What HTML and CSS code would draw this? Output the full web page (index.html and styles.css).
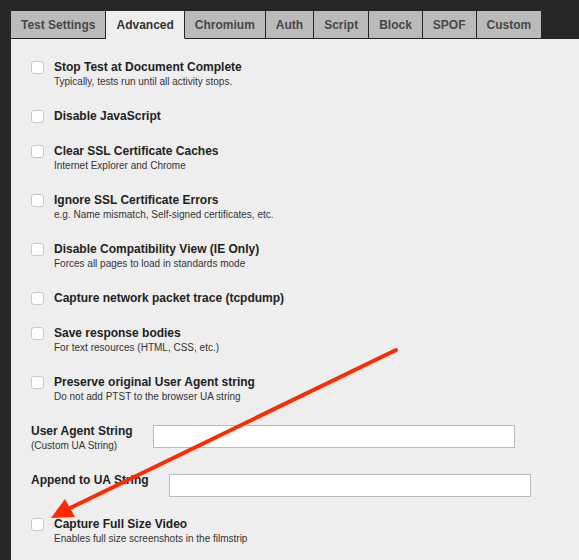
FILE: index.html
```html
<!DOCTYPE html>
<html lang="en">

<head>
    <meta charset="UTF-8">
    <title>Advanced Settings</title>
    <link rel="stylesheet" href="styles.css">
</head>

<body>

    <div class="tabs">
        <span class="tab">Test Settings</span>
        <span class="tab active">Advanced</span>
        <span class="tab">Chromium</span>
        <span class="tab">Auth</span>
        <span class="tab">Script</span>
        <span class="tab">Block</span>
        <span class="tab">SPOF</span>
        <span class="tab">Custom</span>
    </div>

    <div class="panel">

        <label class="option">
            <input type="checkbox">
            <span class="text">
                <span class="title">Stop Test at Document Complete</span>
                <span class="desc">Typically, tests run until all activity stops.</span>
            </span>
        </label>

        <label class="option">
            <input type="checkbox">
            <span class="text">
                <span class="title">Disable JavaScript</span>
            </span>
        </label>

        <label class="option">
            <input type="checkbox">
            <span class="text">
                <span class="title">Clear SSL Certificate Caches</span>
                <span class="desc">Internet Explorer and Chrome</span>
            </span>
        </label>

        <label class="option">
            <input type="checkbox">
            <span class="text">
                <span class="title">Ignore SSL Certificate Errors</span>
                <span class="desc">e.g. Name mismatch, Self-signed certificates, etc.</span>
            </span>
        </label>

        <label class="option">
            <input type="checkbox">
            <span class="text">
                <span class="title">Disable Compatibility View (IE Only)</span>
                <span class="desc">Forces all pages to load in standards mode</span>
            </span>
        </label>

        <label class="option">
            <input type="checkbox">
            <span class="text">
                <span class="title">Capture network packet trace (tcpdump)</span>
            </span>
        </label>

        <label class="option">
            <input type="checkbox">
            <span class="text">
                <span class="title">Save response bodies</span>
                <span class="desc">For text resources (HTML, CSS, etc.)</span>
            </span>
        </label>

        <label class="option">
            <input type="checkbox">
            <span class="text">
                <span class="title">Preserve original User Agent string</span>
                <span class="desc">Do not add PTST to the browser UA string</span>
            </span>
        </label>

        <div class="field">
            <label class="text" for="uastring">
                <span class="title">User Agent String</span>
                <span class="desc">(Custom UA String)</span>
            </label>
            <input type="text" id="uastring">
        </div>

        <div class="field">
            <label class="text" for="appendua">
                <span class="title">Append to UA String</span>
            </label>
            <input type="text" id="appendua">
        </div>

        <label class="option">
            <input type="checkbox">
            <span class="text">
                <span class="title">Capture Full Size Video</span>
                <span class="desc">Enables full size screenshots in the filmstrip</span>
            </span>
        </label>

    </div>

    <!-- annotation arrow -->
    <svg class="arrow" width="579" height="560" viewBox="0 0 579 560">
        <line x1="396" y1="350" x2="68" y2="509" stroke="#ff2a00" stroke-width="4" stroke-linecap="round" />
        <polygon points="51,518 65,499 75,517" fill="#ff2a00" />
    </svg>

</body>

</html>
```

FILE: styles.css
```css
:root {
    --bg: #262626;
    --panel: #eeeeee;
    --tab: #bbbbbb;
    --tab-text: #474747;
    --text: #222;
    --muted: #333;
    --border: #bbbbbb;
}

* {
    box-sizing: border-box;
}

html,
body {
    height: 100%;
}

body {
    margin: 0;
    padding: 11px 0 0 11px;
    background: var(--bg);
    font-family: "Liberation Sans", Arial, sans-serif;
    color: var(--text);
    position: relative;
    overflow: hidden;
    display: flex;
    flex-direction: column;
}

.tabs {
    display: flex;
}

.tab {
    background: var(--tab);
    color: var(--tab-text);
    font-size: 12px;
    font-weight: bold;
    line-height: 14px;
    padding: 7px 10px 6px;
    border-right: 1px solid var(--bg);
    border-bottom: 1px solid var(--bg);
    white-space: nowrap;
}

.tab:last-child {
    border-right: none;
}

.tab.active {
    background: var(--panel);
    color: #333;
    border-bottom-color: var(--panel);
}

.panel {
    flex: 1;
    background: var(--panel);
    padding: 21px 20px 0;
}

.option {
    display: flex;
    gap: 10px;
    margin-bottom: 20px;
}

.option input {
    appearance: none;
    -webkit-appearance: none;
    flex: none;
    width: 13px;
    height: 13px;
    margin: 1px 0 0;
    border: 1px solid #c8c8c8;
    border-radius: 3px;
    background: #fff;
}

.text {
    display: flex;
    flex-direction: column;
}

.title {
    font-size: 12px;
    font-weight: bold;
    line-height: 15px;
    color: var(--text);
}

.desc {
    font-size: 10px;
    line-height: 14px;
    color: var(--muted);
}

.field {
    display: flex;
    align-items: flex-start;
    gap: 20px;
    margin-bottom: 20px;
}

.field input {
    width: 362px;
    height: 23px;
    margin: 1px 0 0;
    border: 1px solid var(--border);
    background: #fff;
    border-radius: 0;
}

.arrow {
    position: absolute;
    top: 0;
    left: 0;
    pointer-events: none;
}
```
